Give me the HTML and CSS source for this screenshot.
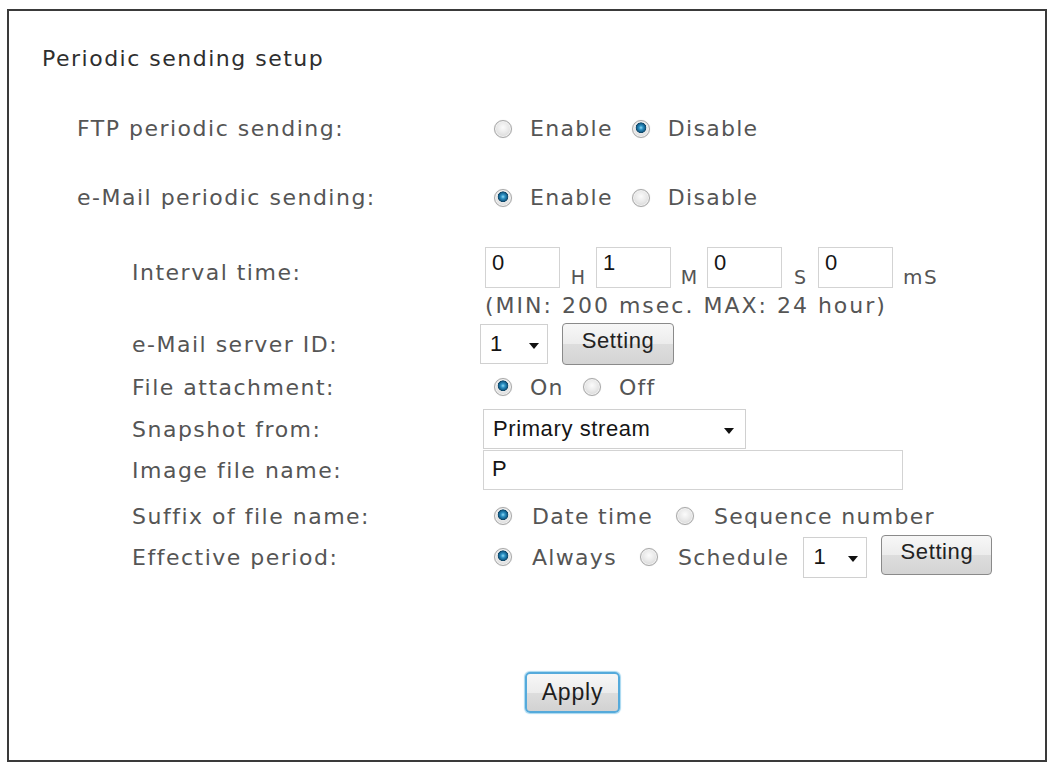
FILE: index.html
```html
<!DOCTYPE html>
<html lang="en">
<head>
<meta charset="utf-8">
<title>Periodic sending setup</title>
<link rel="stylesheet" href="styles.css">
</head>
<body>
<div class="frame">
  <div class="title">Periodic sending setup</div>

  <div class="row row-top">
    <div class="label">FTP periodic sending:</div>
    <div class="ctl options">
      <label class="opt"><input type="radio" name="ftp" class="radio"><span>Enable</span></label>
      <label class="opt"><input type="radio" name="ftp" class="radio" checked><span>Disable</span></label>
    </div>
  </div>

  <div class="row row-top">
    <div class="label">e-Mail periodic sending:</div>
    <div class="ctl options">
      <label class="opt"><input type="radio" name="mail" class="radio" checked><span>Enable</span></label>
      <label class="opt"><input type="radio" name="mail" class="radio"><span>Disable</span></label>
    </div>
  </div>

  <div class="row row-interval">
    <div class="label sub label-low">Interval time:</div>
    <div class="ctl times">
      <input class="field time" type="text" value="0"><span class="unit">H</span>
      <input class="field time" type="text" value="1"><span class="unit">M</span>
      <input class="field time" type="text" value="0"><span class="unit">S</span>
      <input class="field time" type="text" value="0"><span class="unit unit-ms">mS</span>
    </div>
  </div>

  <div class="row row-note">
    <div class="label sub"></div>
    <div class="ctl note">(MIN: 200 msec. MAX: 24 hour)</div>
  </div>

  <div class="row row-server">
    <div class="label sub">e-Mail server ID:</div>
    <div class="ctl inline">
      <div class="select select-small"><span>1</span><span class="caret"></span></div>
      <button class="btn btn-setting" type="button">Setting</button>
    </div>
  </div>

  <div class="row row-file">
    <div class="label sub">File attachment:</div>
    <div class="ctl options">
      <label class="opt"><input type="radio" name="att" class="radio" checked><span>On</span></label>
      <label class="opt"><input type="radio" name="att" class="radio"><span>Off</span></label>
    </div>
  </div>

  <div class="row row-snap">
    <div class="label sub">Snapshot from:</div>
    <div class="ctl">
      <div class="select select-wide"><span>Primary stream</span><span class="caret"></span></div>
    </div>
  </div>

  <div class="row row-image">
    <div class="label sub">Image file name:</div>
    <div class="ctl">
      <input class="field name" type="text" value="P">
    </div>
  </div>

  <div class="row row-suffix">
    <div class="label sub">Suffix of file name:</div>
    <div class="ctl options options-wide">
      <label class="opt"><input type="radio" name="suf" class="radio" checked><span>Date time</span></label>
      <label class="opt"><input type="radio" name="suf" class="radio"><span>Sequence number</span></label>
    </div>
  </div>

  <div class="row row-effective">
    <div class="label sub">Effective period:</div>
    <div class="ctl options options-wide">
      <label class="opt"><input type="radio" name="eff" class="radio" checked><span>Always</span></label>
      <label class="opt"><input type="radio" name="eff" class="radio"><span>Schedule</span></label>
      <div class="select select-small select-sched"><span>1</span><span class="caret"></span></div>
      <button class="btn btn-setting btn-sched" type="button">Setting</button>
    </div>
  </div>

  <div class="apply-row">
    <button class="btn btn-apply" type="button">Apply</button>
  </div>
</div>
</body>
</html>
```

FILE: styles.css
```css
html, body {
  margin: 0;
  padding: 0;
  background: #ffffff;
}

body {
  font-family: "DejaVu Sans", Verdana, sans-serif;
  color: #555555;
}

.frame {
  box-sizing: border-box;
  margin: 9px 0 0 7px;
  width: 1040px;
  height: 753px;
  border: 2px solid #3a3a3a;
  background: #fff;
}

.title {
  margin-top: 33px;
  padding-left: 33px;
  height: 30px;
  line-height: 30px;
  font-size: 22px;
  letter-spacing: 1.5px;
  color: #2e2e2e;
}

.row {
  display: grid;
  grid-template-columns: 408px 1fr;
  align-items: center;
  padding-left: 68px;
}

.label {
  font-size: 22px;
  letter-spacing: 1.5px;
  color: #555555;
  white-space: nowrap;
}

.label.sub {
  padding-left: 55px;
}

.label-low {
  align-self: end;
  padding-bottom: 3px;
}

.ctl {
  display: flex;
  align-items: center;
}

/* row heights */
.row-top { height: 69px; }
.title + .row-top { margin-top: 20px; }
.row-interval { height: 41px; margin-top: 15px; }
.row-note { height: 34px; }
.row-server { height: 42px; margin-top: 1px; }
.row-file { height: 44px; }
.row-snap { height: 40px; }
.row-image { height: 40px; margin-top: 1px; }
.row-suffix { height: 40px; padding-top: 6px; }
.row-effective { height: 42px; }

/* radios */
.options {
  gap: 19px;
}

.options-wide {
  gap: 23px;
}

.opt {
  display: flex;
  align-items: center;
  gap: 18px;
  font-size: 22px;
  letter-spacing: 1.3px;
  color: #555555;
}

.options-wide .opt {
  gap: 20px;
}

.options > .opt:first-child {
  margin-left: 9px;
}

.radio {
  -webkit-appearance: none;
  appearance: none;
  margin: 0;
  width: 18px;
  height: 18px;
  border-radius: 50%;
  border: 1px solid #a8a8a8;
  background: radial-gradient(circle at 50% 40%, #fbfbfb 0, #e9e9e9 45%, #cdcdcd 100%);
  box-shadow: inset 0 0 0 1px #f2f2f2, 0 0 1px #cfcfcf;
  box-sizing: border-box;
  flex: none;
}

.radio:checked {
  background:
    radial-gradient(circle at 50% 42%, #93dcf6 0, #2d92c5 2px, #155f8a 4.2px, #0e4464 5px, rgba(0,0,0,0) 5.6px),
    radial-gradient(circle at 50% 40%, #fbfbfb 0, #e6e6e6 55%, #c6c6c6 100%);
}

/* text fields */
.field {
  box-sizing: border-box;
  margin: 0;
  height: 41px;
  border: 1px solid #d3d3d3;
  background: #fff;
  font-family: "Liberation Sans", Arial, sans-serif;
  font-size: 22px;
  color: #151515;
  padding: 0 6px 9px 6px;
  outline: none;
}

.times {
  align-items: flex-end;
  height: 41px;
}

.time {
  width: 75px;
}

.unit {
  width: 36px;
  text-align: center;
  font-size: 19px;
  letter-spacing: 0;
  line-height: 22px;
  color: #555555;
}

.unit-ms {
  width: auto;
  margin-left: 10px;
  font-size: 20px;
  letter-spacing: 1.5px;
}

.note {
  font-size: 22px;
  letter-spacing: 2px;
  color: #555555;
  white-space: nowrap;
}

.name {
  width: 420px;
  height: 40px;
  padding: 0 8px 2px 8px;
  margin-left: -2px;
}

/* selects */
.select {
  box-sizing: border-box;
  display: flex;
  align-items: center;
  justify-content: space-between;
  height: 40px;
  border: 1px solid #d0d0d0;
  background: #fff;
  font-family: "Liberation Sans", Arial, sans-serif;
  font-size: 22px;
  letter-spacing: 0.6px;
  color: #151515;
  padding: 0 8px 0 9px;
}

.select-small {
  width: 68px;
  margin-left: -5px;
}

.select-wide {
  width: 263px;
  margin-left: -2px;
  padding-right: 11px;
}

.caret {
  width: 0;
  height: 0;
  border-left: 5px solid transparent;
  border-right: 5px solid transparent;
  border-top: 6px solid #111;
  margin-top: 3px;
}

.inline {
  gap: 14px;
}

/* buttons */
.btn {
  box-sizing: border-box;
  margin: 0;
  font-family: "Liberation Sans", Arial, sans-serif;
  color: #222;
  cursor: pointer;
}

.btn-setting {
  width: 112px;
  height: 42px;
  border: 1px solid #8a8a8a;
  border-radius: 4px;
  background: linear-gradient(#f7f7f7 0%, #ececec 50%, #dddddd 51%, #d4d4d4 100%);
  font-size: 22px;
  letter-spacing: 0.6px;
  padding: 0 0 6px 0;
}

.select-sched {
  margin-left: -9px;
  width: 64px;
  height: 41px;
}

.btn-sched {
  margin-left: -9px;
  width: 111px;
  height: 40px;
  margin-top: -4px;
}

.apply-row {
  margin-top: 94px;
  padding-left: 516px;
}

.btn-apply {
  width: 95px;
  height: 41px;
  border: 2px solid #55aadb;
  border-radius: 5px;
  background: linear-gradient(#f7f7f7 0%, #ececec 50%, #dddddd 51%, #d2d2d2 100%);
  box-shadow: 0 0 1px 1px #a6d7f0;
  font-size: 23px;
  letter-spacing: 0.8px;
  color: #1e1e1e;
  padding: 0;
}
```
